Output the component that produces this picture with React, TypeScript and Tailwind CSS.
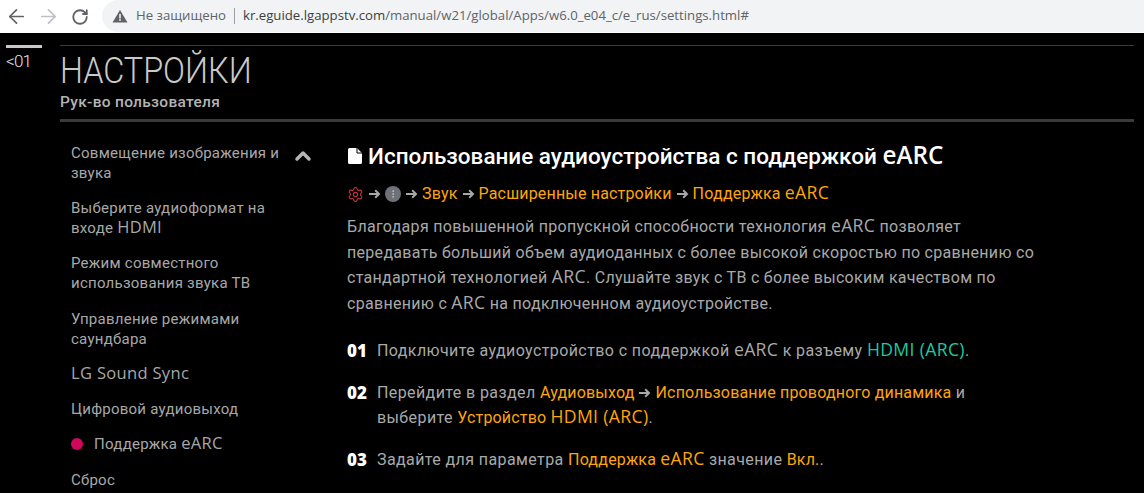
import { ArrowLeft, ArrowRight, RotateCw, ChevronUp, Settings, MoreVertical } from "lucide-react";

const Y = ({ children }: { children: React.ReactNode }) => <span className="text-[#ffa60a] tracking-[0.18px]">{children}</span>;
const L = ({ children }: { children: React.ReactNode }) => (
  <span className="font-['Open_Sans'] font-normal text-[1.1em] leading-none tracking-[0.02em]">{children}</span>
);

const Arrow = () => (
  <svg width="13" height="12" viewBox="0 0 13 12" fill="none" className="inline-block mx-[4px] align-[-1px]">
    <path d="M1 6h10M7.200 2.200 11 6 7.200 9.800" stroke="#a8a8a8" strokeWidth="2" />
  </svg>
);

const menu = [
  { text: <>Совмещение изображения и звука</>, cls: "mb-[15px]" },
  { text: <>Выберите аудиоформат на входе <L>HDMI</L></>, cls: "mb-[15px]" },
  { text: <>Режим совместного использования звука ТВ</>, cls: "mb-[16px]" },
  { text: <>Управление режимами саундбара</>, cls: "mb-[15px]" },
  { text: <L>LG Sound Sync</L>, cls: "mb-[15px]" },
  { text: <>Цифровой аудиовыход</>, cls: "mb-[15px]" },
];

const App = () => {
  return (
    <div className="w-[1144px] h-[493px] overflow-hidden bg-black flex flex-col font-['Roboto']">
      <div className="h-[33px] shrink-0 bg-white flex items-center">
        <span className="w-[32px] flex justify-center"><ArrowLeft size={23} strokeWidth={1.800} className="text-[#5f6368]" /></span>
        <span className="w-[32px] flex justify-center"><ArrowRight size={23} strokeWidth={1.800} className="text-[#bdc1c6]" /></span>
        <span className="w-[32px] flex justify-center"><RotateCw size={18} strokeWidth={2.400} className="text-[#5f6368]" /></span>
        <div className="ml-[6px] flex-1 h-[32px] self-start bg-[#f1f3f4] rounded-l-full flex items-center pl-[10px] text-[13.200px] font-['Open_Sans']">
          <svg width="16" height="14" viewBox="0 0 16 14"><path d="M8 1 15.500 13.500H.5Z" fill="#5f6368" /><rect x="7.200" y="5" width="1.600" height="4.500" fill="#f1f3f4" /><rect x="7.200" y="10.200" width="1.600" height="1.600" fill="#f1f3f4" /></svg>
          <span className="ml-[8px] text-[#5f6368]">Не защищено</span>
          <span className="mx-[8px] w-px h-[16px] bg-[#9aa0a6]"></span>
          <span className="text-[#3c4043]">kr.eguide.lgappstv.com<span className="text-[#5f6368]">/manual/w21/global/Apps/w6.0_e04_c/e_rus/settings.html#</span></span>
        </div>
      </div>

      <div className="flex-1 flex pt-[12px] min-h-0">
        <div className="w-[36px] ml-[6px] shrink-0">
          <div className="h-[3px] bg-[#c8c8c8]"></div>
          <div className="text-[17px] leading-[20px] text-[#e4e4e4] mt-[3px] font-light tracking-[-0.8px]">&lt;01</div>
        </div>

        <div className="ml-[18px] w-[1074px] flex flex-col">
          <div className="h-px bg-[#3a3a3a]"></div>
          <h1 className="text-[37px] leading-[44px] font-light text-[#c9c9c9] mt-[3px] origin-left scale-x-[0.875]">НАСТРОЙКИ</h1>
          <div className="text-[15.500px] leading-[20px] font-medium text-[#b4b4b4] -mt-[1px] tracking-[0.3px]">Рук-во пользователя</div>
          <div className="h-[3px] bg-[#3a3a3a] mt-[7px]"></div>

          <div className="flex mt-[20px]">
            <div className="w-[287px] shrink-0 pl-[11px] pt-[1px] relative text-[15px] tracking-[0.25px] leading-[20px] text-[#a8a8a8]">
              <ChevronUp size={24} strokeWidth={3.500} className="absolute left-[231px] top-[2px] text-[#b5b5b5]" />
              <div className="w-[215px]">
                {menu.map((m, i) => (
                  <div key={i} className={m.cls}>{m.text}</div>
                ))}
              </div>
              <div className="flex items-center mb-[16px]">
                <span className="w-[12px] h-[12px] rounded-full bg-[#d0085c]"></span>
                <span className="ml-[11px]">Поддержка <L>eARC</L></span>
              </div>
              <div>Сброс</div>
            </div>

            <div className="flex-1 pt-[1px] text-[16px] tracking-[0.3px] text-[#a9a9a9]">
              <h2 className="flex items-center text-[22.500px] tracking-normal leading-[26px] font-medium text-white">
                <svg width="16" height="18" viewBox="0 0 16 18" className="mr-[5px]"><path d="M1 2.500A1.500 1.500 0 0 1 2.500 1H10l5 5v9.500A1.500 1.500 0 0 1 13.500 17h-11A1.500 1.500 0 0 1 1 15.500Z" fill="#fff" /><path d="M10 1v5h5" fill="none" stroke="#000" strokeWidth="1" /></svg>
                <span>Использование аудиоустройства с поддержкой <span className="font-['Open_Sans'] font-semibold text-[1.08em] leading-none">eARC</span></span>
              </h2>
              <div className="mt-[13px] leading-[24px] flex items-center">
                <Settings size={17} strokeWidth={1.500} className="text-[#c9353d]" />
                <Arrow />
                <span className="w-[16px] h-[16px] rounded-full bg-[#6d7278] flex items-center justify-center"><MoreVertical size={10} className="text-[#c8c8c8]" /></span>
                <Arrow />
                <Y>Звук</Y>
                <Arrow />
                <Y>Расширенные настройки</Y>
                <Arrow />
                <Y>Поддержка <L>eARC</L></Y>
              </div>
              <p className="mt-[8px] w-[700px] leading-[25.500px]">
                Благодаря повышенной пропускной способности технология <L>eARC</L> позволяет передавать больший объем аудиоданных с более высокой скоростью по сравнению со стандартной технологией <L>ARC</L>. Слушайте звук с ТВ с более высоким качеством по сравнению с <L>ARC</L> на подключенном аудиоустройстве.
              </p>
              <div className="mt-[22px] flex leading-[25px] tracking-[0.4px]">
                <span className="w-[30px] shrink-0 text-[17px] tracking-normal font-['Open_Sans'] font-extrabold text-white">01</span>
                <span>Подключите аудиоустройство с поддержкой <L>eARC</L> к разъему <span className="text-[#1fc9a0]"><L>HDMI (ARC)</L></span>.</span>
              </div>
              <div className="mt-[17px] flex leading-[25px] tracking-[0.4px]">
                <span className="w-[30px] shrink-0 text-[17px] tracking-normal font-['Open_Sans'] font-extrabold text-white">02</span>
                <span className="w-[640px]">Перейдите в раздел <Y>Аудиовыход</Y><Arrow /><Y>Использование проводного динамика</Y> и выберите <Y>Устройство <L>HDMI (ARC)</L></Y>.</span>
              </div>
              <div className="mt-[17px] flex leading-[25px] tracking-[0.4px]">
                <span className="w-[30px] shrink-0 text-[17px] tracking-normal font-['Open_Sans'] font-extrabold text-white">03</span>
                <span>Задайте для параметра <Y>Поддержка <L>eARC</L></Y> значение <Y>Вкл.</Y>.</span>
              </div>
            </div>
          </div>
        </div>
      </div>
    </div>
  );
};

export default App;
